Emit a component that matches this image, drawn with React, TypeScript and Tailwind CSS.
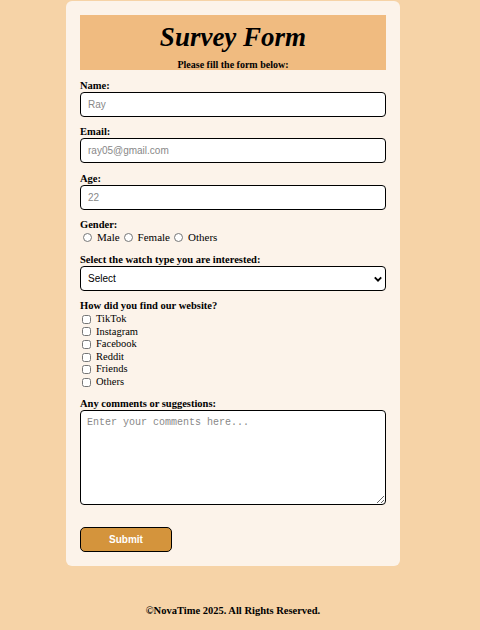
import { useState } from 'react'

const sources = ['TikTok', 'Instagram', 'Facebook', 'Reddit', 'Friends', 'Others']
const genders = ['Male', 'Female', 'Others']

export default function App() {
  const [name, setName] = useState('')
  const [email, setEmail] = useState('')
  const [age, setAge] = useState('')

  return (
    <div className="min-h-[630px] bg-[#f6d3a7] pr-[14px] pt-px font-['Liberation_Serif',serif] text-black">
      <form
        className="mx-auto w-[334px] rounded-[6px] bg-[#fcf3ea] p-[14px]"
        onSubmit={(e) => e.preventDefault()}
      >
        <div className="flex h-[55px] flex-col items-center bg-[#f0bb80]">
          <h1 className="mt-[6px] text-[27px] font-bold italic leading-[32px]">Survey Form</h1>
          <p className="mt-[6px] text-[10px] font-bold leading-[12px]">Please fill the form below:</p>
        </div>

        <label className="mt-[10px] block text-[10.5px] font-bold leading-[12px]">Name:</label>
        <input
          value={name}
          onChange={(e) => setName(e.target.value)}
          placeholder="Ray"
          className="block h-[25px] w-full rounded-[4px] border-[1.5px] border-black bg-white px-[7px] font-['Liberation_Sans',sans-serif] text-[10px] outline-none placeholder:text-[#888888]"
        />

        <label className="mt-[9px] block text-[10.5px] font-bold leading-[12px]">Email:</label>
        <input
          value={email}
          onChange={(e) => setEmail(e.target.value)}
          placeholder="ray05@gmail.com"
          className="block h-[25px] w-full rounded-[4px] border-[1.5px] border-black bg-white px-[7px] font-['Liberation_Sans',sans-serif] text-[10px] outline-none placeholder:text-[#888888]"
        />

        <label className="mt-[10px] block text-[10.5px] font-bold leading-[12px]">Age:</label>
        <input
          value={age}
          onChange={(e) => setAge(e.target.value)}
          placeholder="22"
          className="block h-[25px] w-full rounded-[4px] border-[1.5px] border-black bg-white px-[7px] font-['Liberation_Sans',sans-serif] text-[10px] outline-none placeholder:text-[#888888]"
        />

        <label className="mt-[9px] block text-[10.5px] font-bold leading-[12px]">Gender:</label>
        <div className="flex items-center text-[11px] leading-[13px]">
          {genders.map((g) => (
            <label key={g} className="mr-[1px] flex items-center">
              <input type="radio" name="gender" className="ml-[3px] mr-[5px] h-[9px] w-[9px]" />
              {g}
            </label>
          ))}
        </div>

        <label className="mt-[10px] block text-[10.5px] font-bold leading-[12px]">
          Select the watch type you are interested:
        </label>
        <div className="relative">
          <select className="block h-[25px] w-full appearance-none rounded-[4px] border-[1.5px] border-black bg-white px-[7px] font-['Liberation_Sans',sans-serif] text-[10px] outline-none">
            <option>Select</option>
            <option>Analog</option>
            <option>Digital</option>
            <option>Smart</option>
          </select>
          <svg
            viewBox="0 0 10 10"
            className="pointer-events-none absolute right-[4px] top-[9px] h-[8px] w-[8px]"
            fill="none"
            stroke="black"
            strokeWidth="2.4"
          >
            <path d="M1 3l4 4 4-4" />
          </svg>
        </div>

        <label className="mt-[9px] block text-[10.5px] font-bold leading-[12px]">How did you find our website?</label>
        <div className="mt-px flex flex-col text-[10.5px] leading-[12.6px]">
          {sources.map((s) => (
            <label key={s} className="flex items-center">
              <input type="checkbox" className="ml-[2px] mr-[5px] h-[9px] w-[9px]" />
              {s}
            </label>
          ))}
        </div>

        <label className="mt-[9px] block text-[10.5px] font-bold leading-[12px]">Any comments or suggestions:</label>
        <textarea
          placeholder="Enter your comments here..."
          className="block h-[95px] w-full rounded-[4px] border-[1.5px] border-black bg-white px-[6px] py-[4px] font-['Liberation_Mono',monospace] text-[10px] outline-none placeholder:text-[#888888]"
        />

        <button
          type="submit"
          className="mt-[22px] h-[25px] w-[92px] rounded-[5px] border-[1.5px] border-black bg-[#d4943c] font-['Liberation_Sans',sans-serif] text-[10px] font-bold text-white"
        >
          Submit
        </button>
      </form>

      <footer className="mt-[39px] text-center text-[10.5px] font-bold leading-[12px]">
        ©NovaTime 2025. All Rights Reserved.
      </footer>
    </div>
  )
}
